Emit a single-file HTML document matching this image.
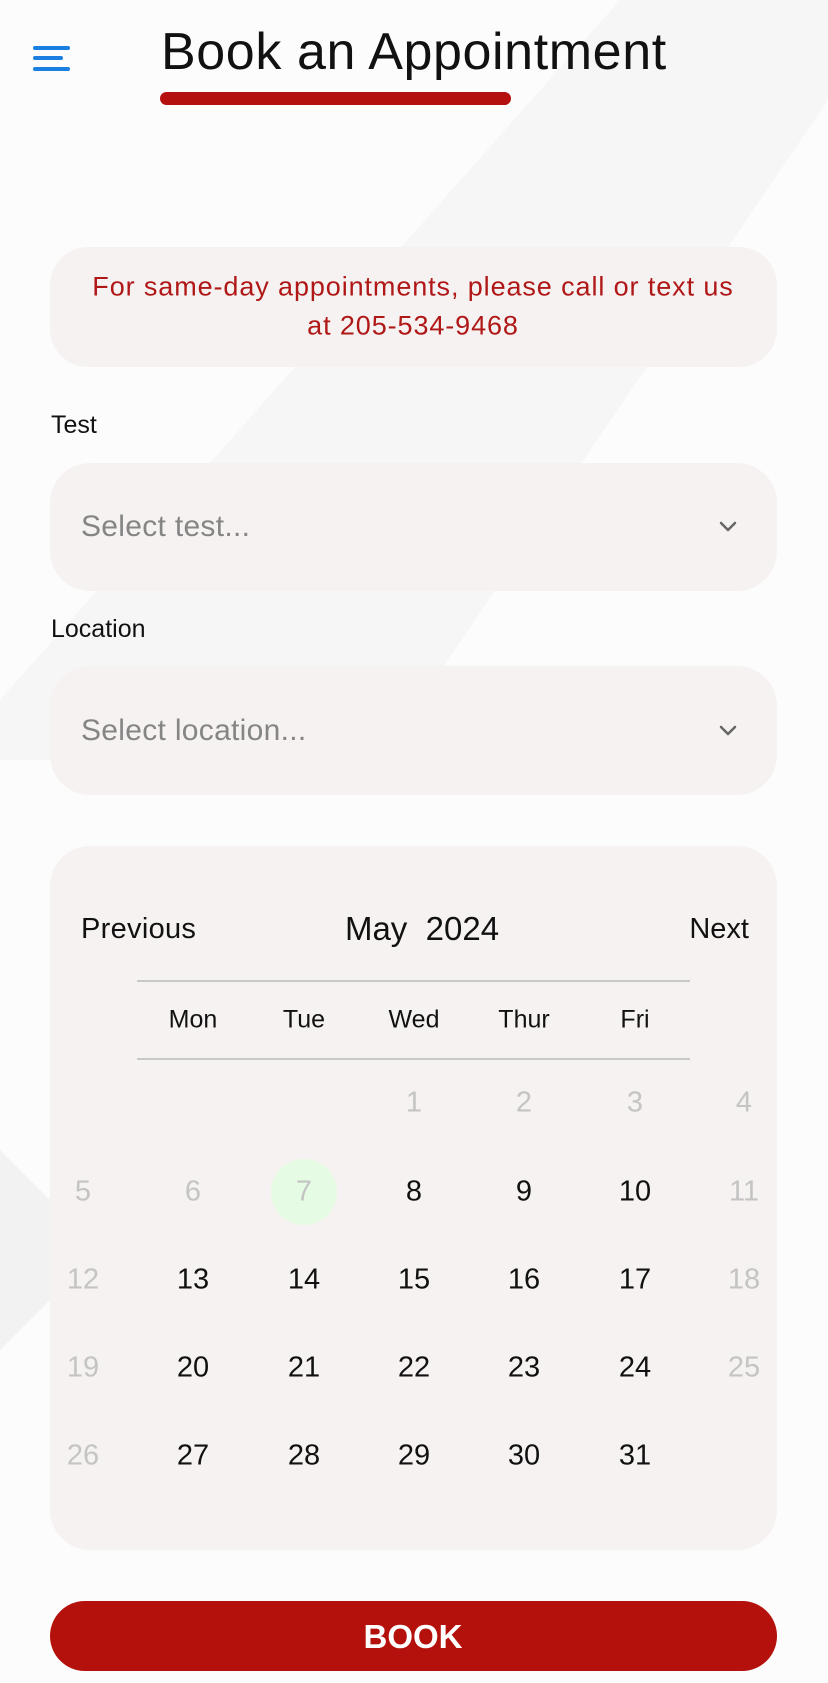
<!DOCTYPE html>
<html><head><meta charset="utf-8">
<style>
*{margin:0;padding:0;box-sizing:border-box}
body{width:828px;height:1683px;position:relative;overflow:hidden;background:#fcfcfc;font-family:"Liberation Sans",sans-serif}
.abs{position:absolute}
.box{position:absolute;left:50px;width:727px;background:#f6f2f1;}
.c{position:absolute;transform:translate(-50%,-50%);white-space:nowrap}
.num{font-size:29px;color:#111}
.g{color:#c4c4c4}
</style></head><body>
<svg class="abs" style="left:0;top:0" width="828" height="1683">
<polygon points="620,0 828,0 828,100 380,760 0,760 0,700" fill="#f6f6f6"/>
<polygon points="0,1150 100,1250 0,1350" fill="#f2f2f2"/>
</svg>
<svg class="abs" style="left:33px;top:44px" width="38" height="30"><g stroke="#1a7fe0" stroke-width="4" stroke-linecap="round"><line x1="2" y1="4" x2="35" y2="4"/><line x1="2" y1="14" x2="28" y2="14"/><line x1="2" y1="25" x2="35" y2="25"/></g></svg>
<div class="abs" style="left:161px;top:22px;font-size:52px;color:#111;letter-spacing:0.6px">Book an Appointment</div>
<div class="abs" style="left:160px;top:92px;width:351px;height:13px;border-radius:7px;background:#b41010"></div>
<div class="box" style="top:247px;height:120px;border-radius:38px;"></div>
<div class="c" style="left:413px;top:287px;font-size:27px;color:#b01818;letter-spacing:0.9px">For same-day appointments, please call or text us</div>
<div class="c" style="left:413px;top:326px;font-size:27px;color:#b01818;letter-spacing:0.9px">at 205-534-9468</div>
<div class="abs" style="left:51px;top:411px;font-size:25px;color:#111">Test</div>
<div class="box" style="top:463px;height:128px;border-radius:40px"></div>
<div class="abs" style="left:81px;top:510px;font-size:30px;color:#858585;letter-spacing:0.3px">Select test...</div>
<svg class="abs" style="left:718px;top:520px" width="20" height="14"><polyline points="3,3 10,10 17,3" fill="none" stroke="#666" stroke-width="2.5" stroke-linecap="round" stroke-linejoin="round"/></svg>
<div class="abs" style="left:51px;top:615px;font-size:25px;color:#111">Location</div>
<div class="box" style="top:666px;height:129px;border-radius:40px"></div>
<div class="abs" style="left:81px;top:714px;font-size:30px;color:#858585;letter-spacing:0.3px">Select location...</div>
<svg class="abs" style="left:718px;top:724px" width="20" height="14"><polyline points="3,3 10,10 17,3" fill="none" stroke="#666" stroke-width="2.5" stroke-linecap="round" stroke-linejoin="round"/></svg>
<div class="box" style="top:846px;height:704px;border-radius:40px"></div>
<div class="abs" style="left:81px;top:913px;font-size:29px;color:#111;letter-spacing:0.3px">Previous</div>
<div class="c" style="left:422px;top:929px;font-size:33px;color:#111">May&nbsp; 2024</div>
<div class="abs" style="right:79px;top:913px;font-size:29px;color:#111">Next</div>
<div class="abs" style="left:137px;top:980px;width:553px;height:1.5px;background:#c8c8c8"></div>
<div class="abs" style="left:137px;top:1058px;width:553px;height:1.5px;background:#c8c8c8"></div>
<div class="c" style="left:193px;top:1020px;font-size:25px;color:#111">Mon</div>
<div class="c" style="left:304px;top:1020px;font-size:25px;color:#111">Tue</div>
<div class="c" style="left:414px;top:1020px;font-size:25px;color:#111">Wed</div>
<div class="c" style="left:524px;top:1020px;font-size:25px;color:#111">Thur</div>
<div class="c" style="left:635px;top:1020px;font-size:25px;color:#111">Fri</div>
<div class="abs" style="left:271px;top:1159px;width:66px;height:66px;border-radius:50%;background:#e6fbe4"></div>
<div class="c num g" style="left:414px;top:1103px">1</div>
<div class="c num g" style="left:524px;top:1103px">2</div>
<div class="c num g" style="left:635px;top:1103px">3</div>
<div class="c num g" style="left:744px;top:1103px">4</div>
<div class="c num g" style="left:83px;top:1192px">5</div>
<div class="c num g" style="left:193px;top:1192px">6</div>
<div class="c num g" style="left:304px;top:1192px">7</div>
<div class="c num" style="left:414px;top:1192px">8</div>
<div class="c num" style="left:524px;top:1192px">9</div>
<div class="c num" style="left:635px;top:1192px">10</div>
<div class="c num g" style="left:744px;top:1192px">11</div>
<div class="c num g" style="left:83px;top:1280px">12</div>
<div class="c num" style="left:193px;top:1280px">13</div>
<div class="c num" style="left:304px;top:1280px">14</div>
<div class="c num" style="left:414px;top:1280px">15</div>
<div class="c num" style="left:524px;top:1280px">16</div>
<div class="c num" style="left:635px;top:1280px">17</div>
<div class="c num g" style="left:744px;top:1280px">18</div>
<div class="c num g" style="left:83px;top:1368px">19</div>
<div class="c num" style="left:193px;top:1368px">20</div>
<div class="c num" style="left:304px;top:1368px">21</div>
<div class="c num" style="left:414px;top:1368px">22</div>
<div class="c num" style="left:524px;top:1368px">23</div>
<div class="c num" style="left:635px;top:1368px">24</div>
<div class="c num g" style="left:744px;top:1368px">25</div>
<div class="c num g" style="left:83px;top:1456px">26</div>
<div class="c num" style="left:193px;top:1456px">27</div>
<div class="c num" style="left:304px;top:1456px">28</div>
<div class="c num" style="left:414px;top:1456px">29</div>
<div class="c num" style="left:524px;top:1456px">30</div>
<div class="c num" style="left:635px;top:1456px">31</div>
<div class="abs" style="left:50px;top:1601px;width:727px;height:70px;border-radius:35px;background:#b4100c"></div>
<div class="c" style="left:413px;top:1637px;font-size:33px;font-weight:bold;color:#fff">BOOK</div>
</body></html>
